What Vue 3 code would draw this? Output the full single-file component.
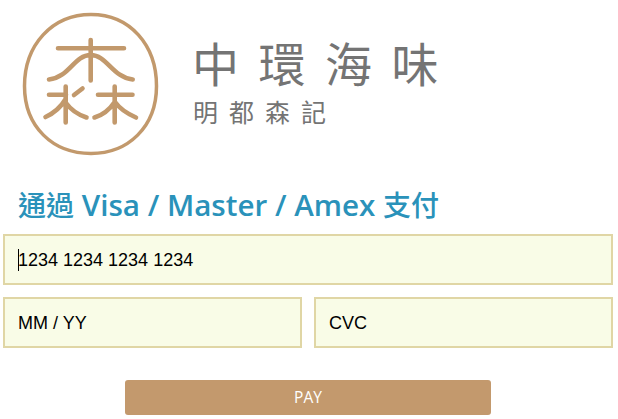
<script setup>
const rows = [{ label: 'MM / YY' }, { label: 'CVC' }]
</script>

<template>
  <main class="page">
    <header class="brand">
      <svg class="emblem" viewBox="0 0 180 170" width="180" height="170" role="img" aria-label="森">
        <path class="ring" d="M91 14.5C130 14.5 156.5 45 156.5 86C156.5 127 128 153.5 91 153.5C53 153.5 24.5 127 24.5 86C24.5 45 52 14.5 91 14.5Z" />
        <path class="mark" d="M58 48.3H124M90.7 40V80.5M49 79.5C70 77 74 55 90.7 55C107 55 112 77 132.7 79.5" />
        <path class="mark" d="M49 94.7H66M65.7 86.5V122.5M45.5 117C54 113 61 107 65.7 99M66 103C71 110 79 115 86.5 117.5M74 95L82.5 88.5" />
        <path class="mark" d="M98 94.7H132.5M114.7 86.5V122.5M94.5 117.5C103 115 110 109 114.7 102M115 102C120 109 128 114 136 117.5" />
      </svg>
      <div class="wordmark">
        <div class="name">中環海味</div>
        <div class="sub">明都森記</div>
      </div>
    </header>

    <h1 class="title"><span class="cjk">通過</span> Visa / Master / Amex <span class="cjk">支付</span></h1>

    <form class="fields" @submit.prevent>
      <div class="field"><span class="caret"></span>1234 1234 1234 1234</div>
      <div class="pair">
        <div v-for="row in rows" :key="row.label" class="field">{{ row.label }}</div>
      </div>
      <button class="pay" type="submit">PAY</button>
    </form>
  </main>
</template>

<style>
html, body { margin: 0; background: #fff; overflow: hidden; }
</style>

<style scoped>
.page {
  width: 618px;
  height: 419px;
  box-sizing: border-box;
  padding: 0 5px 0 3px;
  overflow: hidden;
}
.brand {
  display: flex;
  align-items: flex-start;
  height: 170px;
  margin-left: -3px;
}
.emblem { flex: none; display: block; }
.ring { fill: none; stroke: #c2996c; stroke-width: 3.5; }
.mark { fill: none; stroke: #c2996c; stroke-width: 4.6; stroke-linecap: round; stroke-linejoin: round; }
.wordmark {
  margin-left: 12px;
  padding-top: 34px;
  color: #747474;
  font-family: "Noto Sans CJK TC", sans-serif;
  font-weight: 400;
  white-space: nowrap;
}
.name { font-size: 47px; line-height: 56px; letter-spacing: 19.5px; }
.sub { margin-top: 6px; margin-left: 1px; font-size: 25px; line-height: 30px; letter-spacing: 11px; }
.title {
  margin: 0 0 0 15px;
  height: 64px;
  color: #2a92ba;
  font-family: "Open Sans", "Noto Sans CJK TC", sans-serif;
  font-size: 29.6px;
  font-weight: 600;
  line-height: 70px;
  white-space: nowrap;
}
.cjk { font-size: 28px; font-weight: 500; }
.fields { display: flex; flex-direction: column; margin: 0; }
.field {
  display: flex;
  align-items: center;
  position: relative;
  height: 51px;
  box-sizing: border-box;
  padding: 2px 0 0 13px;
  border: 2px solid #e0d6a5;
  background: #f9fce7;
  color: #000;
  font-family: "Liberation Sans", Arial, sans-serif;
  font-size: 18px;
}
.caret {
  position: absolute;
  left: 13px;
  top: 13px;
  height: 22px;
  width: 1px;
  background: #000;
}
.pair {
  display: grid;
  grid-template-columns: 1fr 1fr;
  column-gap: 12px;
  margin-top: 12px;
}
.pay {
  align-self: center;
  width: 366px;
  height: 35px;
  margin-top: 32px;
  padding: 0 0 2px;
  border: 0;
  border-radius: 3px;
  background: #c3996d;
  color: #fff;
  font-family: "Open Sans", sans-serif;
  font-size: 15.5px;
}
</style>
